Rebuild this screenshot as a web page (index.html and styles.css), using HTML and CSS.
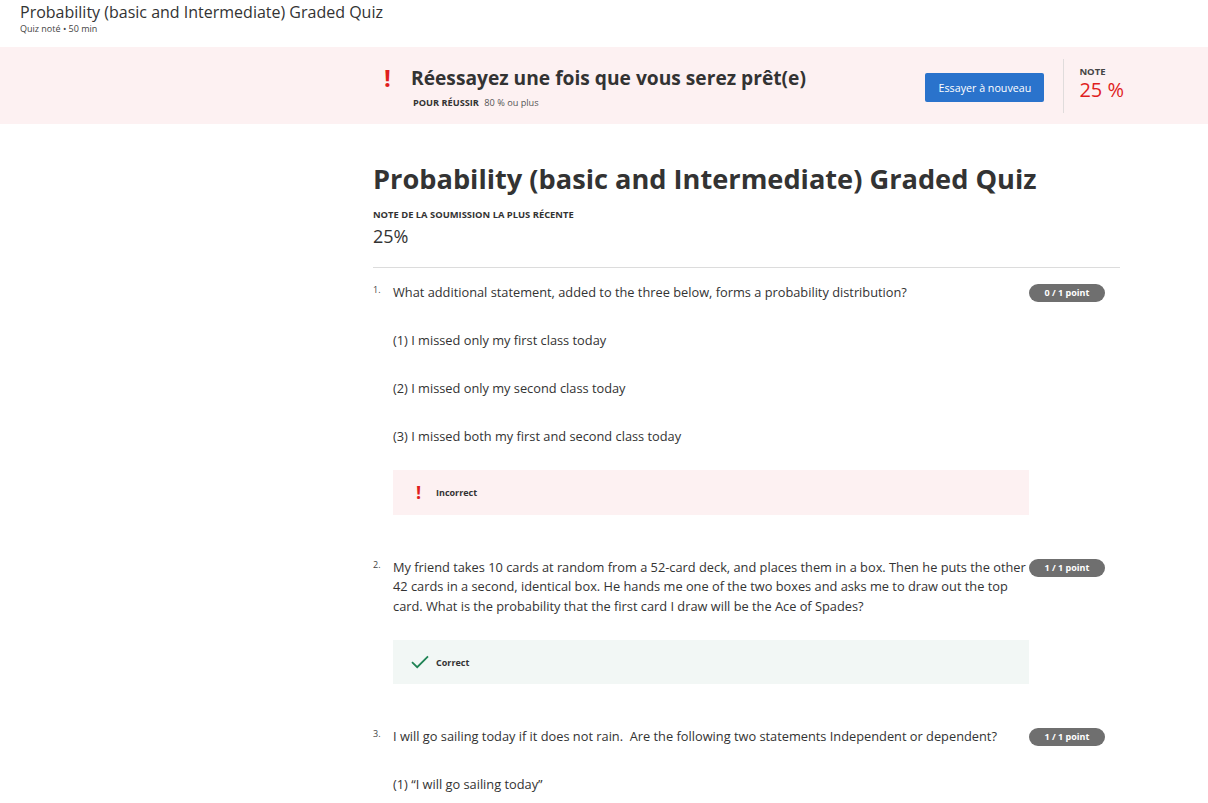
FILE: index.html
```html
<!DOCTYPE html>
<html lang="fr">
<head>
<meta charset="utf-8">
<title>Probability (basic and Intermediate) Graded Quiz</title>
<link rel="stylesheet" href="styles.css">
</head>
<body>
<header class="topbar">
  <div class="topbar-title">Probability (basic and Intermediate) Graded Quiz</div>
  <div class="topbar-sub">Quiz noté • 50 min</div>
</header>

<section class="banner">
  <div class="banner-inner">
    <div class="banner-icon">!</div>
    <div class="banner-text">
      <div class="banner-title">Réessayez une fois que vous serez prêt(e)</div>
      <div class="banner-pass"><span class="pass-label">POUR RÉUSSIR</span> 80 % ou plus</div>
    </div>
    <button class="retry-btn">Essayer à nouveau</button>
    <div class="banner-grade">
      <div class="grade-label">NOTE</div>
      <div class="grade-value">25 %</div>
    </div>
  </div>
</section>

<main class="main">
  <h1 class="quiz-title">Probability (basic and Intermediate) Graded Quiz</h1>
  <div class="recent-label">NOTE DE LA SOUMISSION LA PLUS RÉCENTE</div>
  <div class="recent-value">25%</div>
  <hr class="divider">

  <div class="question">
    <div class="q-row">
      <div class="q-num">1.</div>
      <div class="q-text">What additional statement, added to the three below, forms a probability distribution?</div>
      <div class="q-pill">0 / 1 point</div>
    </div>
    <div class="q-body">
      <p class="q-opt">(1) I missed only my first class today</p>
      <p class="q-opt">(2) I missed only my second class today</p>
      <p class="q-opt">(3) I missed both my first and second class today</p>
      <div class="feedback feedback-bad">
        <span class="fb-icon fb-bang">!</span>
        <span class="fb-text">Incorrect</span>
      </div>
    </div>
  </div>

  <div class="question">
    <div class="q-row">
      <div class="q-num">2.</div>
      <div class="q-text">My friend takes 10 cards at random from a 52-card deck, and places them in a box. Then he puts the other 42 cards in a second, identical box. He hands me one of the two boxes and asks me to draw out the top card. What is the probability that the first card I draw will be the Ace of Spades?</div>
      <div class="q-pill">1 / 1 point</div>
    </div>
    <div class="q-body">
      <div class="feedback feedback-good">
        <span class="fb-icon">
          <svg width="18" height="14" viewBox="0 0 18 14"><path d="M1 7.2 L6.2 12.2 L17 1.3" fill="none" stroke="#1f8354" stroke-width="1.8"/></svg>
        </span>
        <span class="fb-text">Correct</span>
      </div>
    </div>
  </div>

  <div class="question">
    <div class="q-row">
      <div class="q-num">3.</div>
      <div class="q-text">I will go sailing today if it does not rain.&nbsp; Are the following two statements Independent or dependent?</div>
      <div class="q-pill">1 / 1 point</div>
    </div>
    <div class="q-body">
      <p class="q-opt">(1) “I will go sailing today”</p>
    </div>
  </div>
</main>
</body>
</html>
```

FILE: styles.css
```css
* { box-sizing: border-box; }
html, body { margin: 0; padding: 0; }
body {
  font-family: "Open Sans", "Noto Sans", sans-serif;
  color: #333;
  background: #fff;
  overflow: hidden;
  height: 803px;
}

.topbar {
  padding: 1px 20px 0;
  height: 47px;
}
.topbar-title {
  font-size: 16px;
  line-height: 22px;
  color: #333;
}
.topbar-sub {
  font-size: 9px;
  line-height: 12px;
  color: #444;
}

.banner {
  background: #fdf1f2;
  height: 77px;
}
.banner-inner {
  display: flex;
  align-items: flex-start;
  margin-left: 373px;
  width: 751px;
  height: 100%;
}
.banner-icon {
  width: 38px;
  color: #e01e1e;
  font-size: 24px;
  font-weight: 700;
  line-height: 28px;
  padding-top: 17px;
  padding-left: 11px;
}
.banner-text {
  flex: 1;
  padding-top: 17px;
}
.banner-title {
  font-size: 19.2px;
  font-weight: 700;
  line-height: 28px;
  color: #333;
}
.banner-pass {
  font-size: 9.2px;
  line-height: 12px;
  color: #555;
  padding-left: 2px;
  margin-top: 5px;
}
.pass-label {
  font-weight: 700;
  color: #333;
  margin-right: 3px;
}
.retry-btn {
  margin-top: 26px;
  width: 119px;
  height: 29px;
  background: #2a73cc;
  color: #fff;
  border: none;
  border-radius: 2px;
  font-family: inherit;
  font-size: 10.7px;
  padding: 0;
}
.banner-grade {
  margin-left: 19px;
  margin-top: 12px;
  height: 54px;
  border-left: 1px solid #e0dcdc;
  padding-left: 15px;
  padding-top: 6px;
}
.grade-label {
  font-size: 9.5px;
  font-weight: 700;
  line-height: 13px;
  color: #444;
}
.grade-value {
  font-size: 20px;
  line-height: 24px;
  color: #e01e1e;
}

.main {
  margin-left: 373px;
  width: 747px;
  padding-top: 35px;
}
.quiz-title {
  margin: 0;
  font-size: 27.2px;
  font-weight: 700;
  line-height: 40px;
  color: #333;
}
.recent-label {
  margin-top: 10px;
  font-size: 9.4px;
  font-weight: 700;
  line-height: 12px;
  color: #333;
}
.recent-value {
  margin-top: 3px;
  font-size: 18px;
  line-height: 24px;
  color: #333;
}
.divider {
  margin: 19px 0 0;
  border: 0;
  border-top: 1px solid #dcdcdc;
}

.question {
  padding-top: 15px;
  padding-bottom: 28px;
}
.q-row {
  display: flex;
  align-items: flex-start;
}
.q-num {
  width: 20px;
  font-size: 9px;
  line-height: 14px;
  color: #444;
}
.q-text {
  width: 636px;
  font-size: 12.8px;
  line-height: 19.5px;
  color: #333;
}
.q-pill {
  margin-top: 1px;
  width: 76px;
  height: 18px;
  border-radius: 9px;
  background: #6f6f6f;
  color: #fff;
  font-size: 9px;
  font-weight: 700;
  line-height: 18px;
  text-align: center;
}
.q-body {
  padding-left: 20px;
  width: 656px;
  margin-top: -1px;
}
.q-opt {
  margin: 28px 0 0;
  font-size: 12.8px;
  line-height: 20px;
  color: #333;
}
.feedback {
  display: flex;
  align-items: center;
  height: 45px;
  margin-top: 24px;
  padding-left: 18px;
}
.feedback-bad { background: #fdf1f2; }
.feedback-good { background: #f2f7f5; height: 44px; margin-top: 25px; }
.fb-icon {
  width: 25px;
  display: flex;
  align-items: center;
}
.fb-bang {
  color: #e01e1e;
  font-size: 18px;
  font-weight: 700;
  padding-left: 5px;
}
.fb-text {
  font-size: 9px;
  font-weight: 700;
  color: #333;
}
```
